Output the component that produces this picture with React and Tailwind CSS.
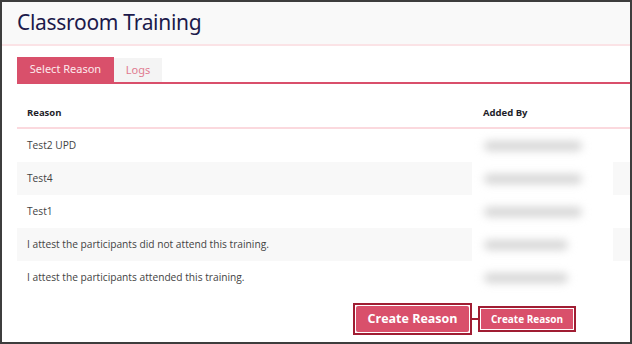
const rows = [
  { reason: "Test2 UPD", w: "w-[98px]" },
  { reason: "Test4", w: "w-[98px]" },
  { reason: "Test1", w: "w-[98px]" },
  { reason: "I attest the participants did not attend this training.", w: "w-[84px]" },
  { reason: "I attest the participants attended this training.", w: "w-[84px]" },
];

const App = () => {
  return (
    <div className="w-[632px] h-[344px] bg-white border-2 border-[#3d3d3d] flex flex-col overflow-hidden font-['Open_Sans',sans-serif]">
      <div className="h-[44px] shrink-0 bg-[#f9f9f9] border-b-2 border-[#fbe3e6] flex items-center pl-[15px]">
        <h1 className="text-[21px] leading-none text-[#1c1a4b] font-['Noto_Sans',sans-serif] tracking-[-0.3px] pb-[2px]">
          Classroom Training
        </h1>
      </div>

      <div className="pl-[15px] pt-[11px] flex flex-col">
        <div className="flex border-b-2 border-[#d94f6b]">
          <div className="h-[25px] w-[97px] bg-[#d9506b] text-[#fde9ec] text-[11px] font-['Noto_Sans',sans-serif] flex items-center justify-center">
            Select Reason
          </div>
          <div className="h-[24px] w-[48px] mt-[1px] bg-[#f4f4f4] text-[#e07b90] text-[11px] font-['Noto_Sans',sans-serif] flex items-center justify-center">
            Logs
          </div>
        </div>

        <div>
          <div className="h-[45px] flex items-end pb-[7px] border-b-2 border-[#fbd9de] text-[9.5px] font-bold text-[#1e1e2a]">
            <div className="pl-[10px] w-[466px]">Reason</div>
            <div>Added By</div>
          </div>
          {rows.map((row, i) => (
            <div
              key={i}
              className={`h-[33px] flex items-center text-[10.2px] text-[#434343] ${i % 2 === 1 ? "bg-[#f8f8f8]" : "bg-white"}`}
            >
              <div className="pl-[10px] w-[455px]">{row.reason}</div>
              <div className="w-[141px] h-full bg-white flex items-center pl-[12px]">
                <div className={`${row.w} h-[10px] rounded-full bg-[#d6d6d6] blur-[4px]`}></div>
              </div>
            </div>
          ))}
        </div>

        <div className="flex items-center pl-[336px] pt-[9px]">
          <button className="h-[32px] w-[119px] border-2 border-[#a01d33] p-[1px] bg-white">
            <span className="w-full h-full bg-[#d9506b] rounded-[2px] flex items-center justify-center text-white text-[12.5px] font-bold">
              Create Reason
            </span>
          </button>
          <div className="w-[6px] h-[2px] bg-[#a01d33]"></div>
          <button className="h-[26px] w-[98px] border-2 border-[#a01d33] p-[1px] bg-white">
            <span className="w-full h-full bg-[#d9506b] flex items-center justify-center text-white text-[10px] font-bold">
              Create Reason
            </span>
          </button>
        </div>
      </div>
    </div>
  );
};

export default App;
